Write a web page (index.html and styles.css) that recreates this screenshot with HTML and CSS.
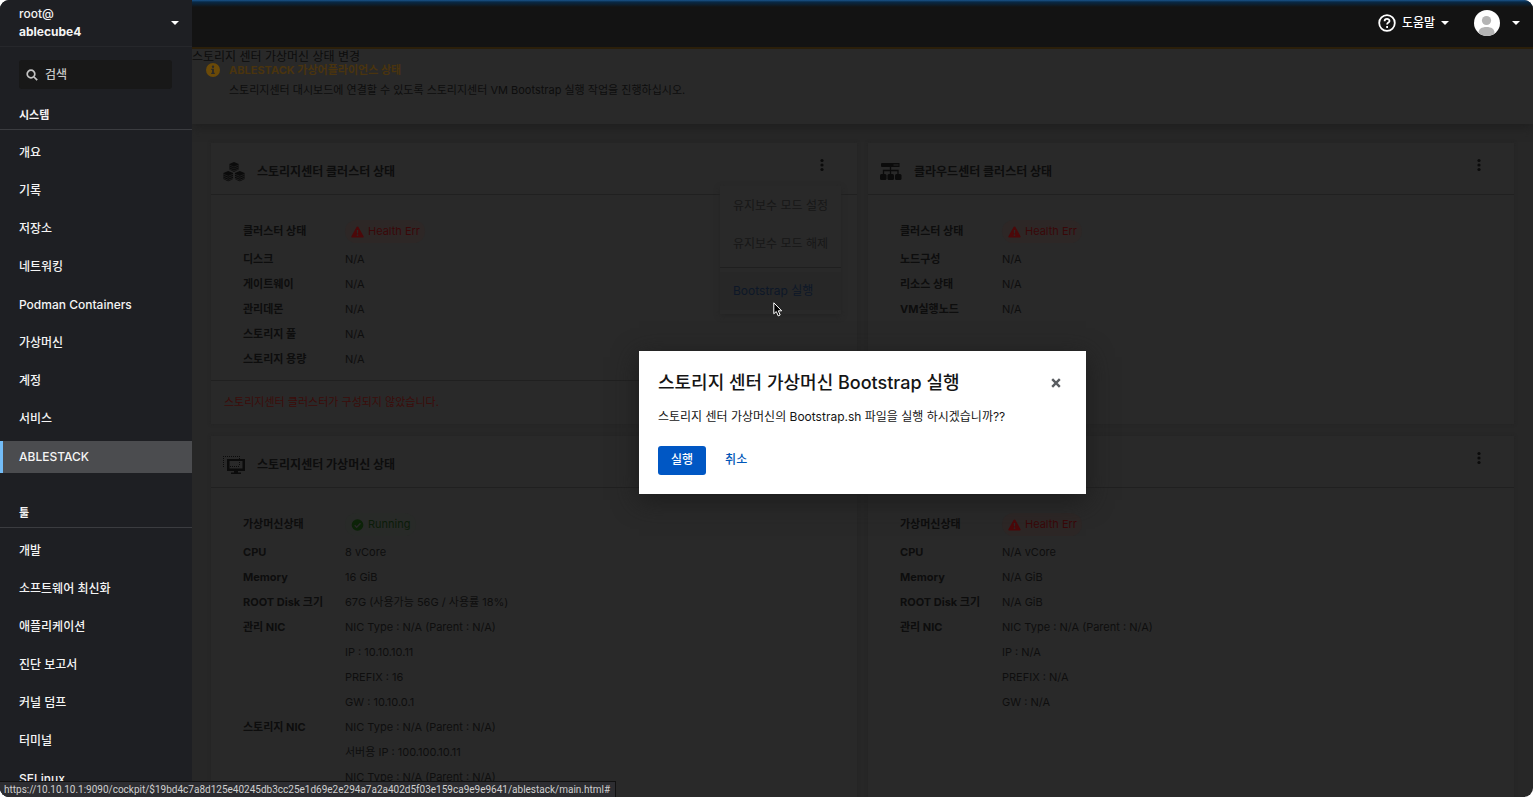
FILE: index.html
```html
<!DOCTYPE html>
<html lang="ko">
<head>
<meta charset="utf-8">
<title>ABLESTACK</title>
<link rel="stylesheet" href="styles.css">
</head>
<body>
<svg class="defs" aria-hidden="true">
  <symbol id="cube" viewBox="0 0 10 10"><path d="M5 0 9.6 2v5.6L5 10 .4 7.6V2z"/><path class="cut" d="M.4 3.1 5 5l4.600-1.900M.4 5 5 6.900 9.600 5M.4 6.900 5 8.800 9.600 6.900"/></symbol>
  <symbol id="cubes" viewBox="0 0 22 20"><use href="#cube" x="6" y="0" width="10" height="10"/><use href="#cube" x="0" y="9" width="10.500" height="10.500"/><use href="#cube" x="11.500" y="9" width="10.500" height="10.500"/></symbol>
  <symbol id="tree" viewBox="0 0 22 20"><path fill-rule="evenodd" d="M2 1h17.500v4H2a1 1 0 0 1-1-1V2a1 1 0 0 1 1-1zm11.500 1.500v1h5v-1z"/><path class="line" d="M10.500 5v7M3.500 13V8.500h14.500V13"/><rect x="0" y="12" width="6.500" height="6" rx="1.500"/><rect x="7.500" y="12" width="6.500" height="6" rx="1.500"/><rect x="15" y="12" width="6.500" height="6" rx="1.500"/></symbol>
  <symbol id="screen" viewBox="0 0 22 20"><path class="dots" d="M0 1.500h17M.5 3v9M16.500 3v8M7 11.500h9"/><path fill-rule="evenodd" d="M4 4h18v12H4zm2.500 2v7.500h13V6z"/><path d="M11 16h4v1.500h3V19H8v-1.500h3z"/></symbol>
  <symbol id="warn" viewBox="0 0 14 12"><path fill-rule="evenodd" d="M7 0c.5 0 .8.2 1 .6l5.500 10c.4.700 0 1.400-.800 1.400H1.300c-.8 0-1.200-.7-.8-1.400L6 .6C6.200.2 6.500 0 7 0zM6.200 3.800l.2 3.800h1.200l.2-3.800zM7 8.300a1 1 0 1 0 0 2 1 1 0 0 0 0-2z"/></symbol>
  <symbol id="kebab" viewBox="0 0 4 14"><circle cx="2" cy="2.500" r="1.600"/><circle cx="2" cy="7" r="1.600"/><circle cx="2" cy="11.500" r="1.600"/></symbol>
  <symbol id="caret" viewBox="0 0 8 4"><path d="M0 0h8L4 4z"/></symbol>
</svg>
<div class="app">
  <aside class="sidebar">
    <button class="host" type="button">
      <span class="host-text"><span>root@</span><strong>ablecube4</strong></span>
      <svg class="caret"><use href="#caret"/></svg>
    </button>
    <label class="search">
      <svg viewBox="0 0 12 12" class="search-icon"><circle cx="5" cy="5" r="3.800"/><path d="m8 8 3.200 3.200"/></svg>
      <input type="text" placeholder="검색" aria-label="검색">
    </label>
    <nav class="nav">
      <h2 class="nav-title">시스템</h2>
      <ul class="nav-list">
        <li><a href="#">개요</a></li>
        <li><a href="#">기록</a></li>
        <li><a href="#">저장소</a></li>
        <li><a href="#">네트워킹</a></li>
        <li><a href="#">Podman Containers</a></li>
        <li><a href="#">가상머신</a></li>
        <li><a href="#">계정</a></li>
        <li><a href="#">서비스</a></li>
        <li><a href="#" class="active" aria-current="page">ABLESTACK</a></li>
      </ul>
      <h2 class="nav-title tools">툴</h2>
      <ul class="nav-list">
        <li><a href="#">개발</a></li>
        <li><a href="#">소프트웨어 최신화</a></li>
        <li><a href="#">애플리케이션</a></li>
        <li><a href="#">진단 보고서</a></li>
        <li><a href="#">커널 덤프</a></li>
        <li><a href="#">터미널</a></li>
        <li><a href="#">SELinux</a></li>
      </ul>
    </nav>
  </aside>
  <div class="main">
    <header class="topbar">
      <button class="top-button" type="button">
        <svg class="help" viewBox="0 0 18 18"><circle cx="9" cy="9" r="7.800"/><path d="M6.600 7.200c0-3 4.900-3 4.900-.2 0 1.700-2.400 1.500-2.400 3.400"/><path d="M9.100 12v2"/></svg>
        <span>도움말</span>
        <svg class="caret"><use href="#caret"/></svg>
      </button>
      <button class="top-button user" type="button" aria-label="세션">
        <svg class="avatar" viewBox="0 0 26 26"><defs><clipPath id="face"><circle cx="13" cy="13" r="13"/></clipPath></defs><circle cx="13" cy="13" r="13" fill="#fff"/><g clip-path="url(#face)" fill="#b4b4b4"><circle cx="12.500" cy="10.500" r="4.600"/><path d="M4.500 26v-3c0-4 3-6 8-6s8 2 8 6v3z"/></g></svg>
        <svg class="caret"><use href="#caret"/></svg>
      </button>
    </header>
    <div class="content">
      <section class="alert">
        <h1 class="page-title">스토리지 센터 가상머신 상태 변경</h1>
        <div class="alert-body">
          <svg class="info" viewBox="0 0 14 14"><circle cx="7" cy="7" r="7"/><path d="M5.300 5.700h2.600v4h.9v1.400H5.200V9.700h.9V7h-.8z"/><circle class="dot" cx="7" cy="3.700" r="1.200"/></svg>
          <div>
            <h2 class="alert-title">ABLESTACK 가상어플라이언스 상태</h2>
            <p>스토리지센터 대시보드에 연결할 수 있도록 스토리지센터 VM Bootstrap 실행 작업을 진행하십시오.</p>
          </div>
        </div>
      </section>
      <div class="cards">
        <article class="card">
          <header class="card-head">
            <svg class="card-icon"><use href="#cubes"/></svg>
            <h3>스토리지센터 클러스터 상태</h3>
            <div class="actions">
              <button class="kebab" type="button" aria-label="작업"><svg><use href="#kebab"/></svg></button>
              <div class="menu">
                <button type="button" disabled>유지보수 모드 설정</button>
                <button type="button" disabled>유지보수 모드 해제</button>
                <hr>
                <button type="button" class="hovered">Bootstrap 실행</button>
              </div>
            </div>
          </header>
          <dl class="facts">
            <dt>클러스터 상태</dt><dd><span class="pill bad"><svg><use href="#warn"/></svg>Health Err</span></dd>
            <dt>디스크</dt><dd>N/A</dd>
            <dt>게이트웨이</dt><dd>N/A</dd>
            <dt>관리데몬</dt><dd>N/A</dd>
            <dt>스토리지 풀</dt><dd>N/A</dd>
            <dt>스토리지 용량</dt><dd>N/A</dd>
          </dl>
          <footer class="card-foot">스토리지센터 클러스터가 구성되지 않았습니다.</footer>
        </article>
        <article class="card">
          <header class="card-head">
            <svg class="card-icon"><use href="#tree"/></svg>
            <h3>클라우드센터 클러스터 상태</h3>
            <div class="actions"><button class="kebab" type="button" aria-label="작업"><svg><use href="#kebab"/></svg></button></div>
          </header>
          <dl class="facts">
            <dt>클러스터 상태</dt><dd><span class="pill bad"><svg><use href="#warn"/></svg>Health Err</span></dd>
            <dt>노드구성</dt><dd>N/A</dd>
            <dt>리소스 상태</dt><dd>N/A</dd>
            <dt>VM실행노드</dt><dd>N/A</dd>
          </dl>
        </article>
        <article class="card">
          <header class="card-head">
            <svg class="card-icon"><use href="#screen"/></svg>
            <h3>스토리지센터 가상머신 상태</h3>
            <div class="actions"><button class="kebab" type="button" aria-label="작업"><svg><use href="#kebab"/></svg></button></div>
          </header>
          <dl class="facts">
            <dt>가상머신상태</dt><dd><span class="pill good"><svg viewBox="0 0 12 12"><circle cx="6" cy="6" r="5.800"/><path class="tick" d="m3.200 6.200 2 2 3.800-3.900"/></svg>Running</span></dd>
            <dt>CPU</dt><dd>8 vCore</dd>
            <dt>Memory</dt><dd>16 GiB</dd>
            <dt>ROOT Disk 크기</dt><dd>67G (사용가능 56G / 사용률 18%)</dd>
            <dt>관리 NIC</dt><dd>NIC Type : N/A (Parent : N/A)</dd>
            <dd>IP : 10.10.10.11</dd>
            <dd>PREFIX : 16</dd>
            <dd>GW : 10.10.0.1</dd>
            <dt>스토리지 NIC</dt><dd>NIC Type : N/A (Parent : N/A)</dd>
            <dd>서버용 IP : 100.100.10.11</dd>
            <dd>NIC Type : N/A (Parent : N/A)</dd>
          </dl>
        </article>
        <article class="card">
          <header class="card-head">
            <svg class="card-icon"><use href="#screen"/></svg>
            <h3>클라우드센터 가상머신 상태</h3>
            <div class="actions"><button class="kebab" type="button" aria-label="작업"><svg><use href="#kebab"/></svg></button></div>
          </header>
          <dl class="facts">
            <dt>가상머신상태</dt><dd><span class="pill bad"><svg><use href="#warn"/></svg>Health Err</span></dd>
            <dt>CPU</dt><dd>N/A vCore</dd>
            <dt>Memory</dt><dd>N/A GiB</dd>
            <dt>ROOT Disk 크기</dt><dd>N/A GiB</dd>
            <dt>관리 NIC</dt><dd>NIC Type : N/A (Parent : N/A)</dd>
            <dd>IP : N/A</dd>
            <dd>PREFIX : N/A</dd>
            <dd>GW : N/A</dd>
          </dl>
        </article>
      </div>
      <div class="backdrop">
        <section class="dialog" role="dialog" aria-modal="true" aria-labelledby="dialog-title">
          <header class="dialog-head">
            <h2 id="dialog-title">스토리지 센터 가상머신 Bootstrap 실행</h2>
            <button class="close" type="button" aria-label="닫기"><svg viewBox="0 0 10 10"><path d="m1.200 1.200 7.600 7.600M8.800 1.200 1.200 8.800"/></svg></button>
          </header>
          <p>스토리지 센터 가상머신의 Bootstrap.sh 파일을 실행 하시겠습니까??</p>
          <div class="dialog-actions">
            <button class="primary" type="button">실행</button>
            <button class="link" type="button">취소</button>
          </div>
        </section>
      </div>
    </div>
  </div>
  <svg class="pointer" viewBox="0 0 10 15"><path d="M.8.8v11l2.500-2.300 1.900 4.400 2-.900-1.900-4.200h3.400z"/></svg>
  <div class="status-bar">https://10.10.10.1:9090/cockpit/$19bd4c7a8d125e40245db3cc25e1d69e2e294a7a2a402d5f03e159ca9e9e9641/ablestack/main.html#</div>
</div>
</body>
</html>
```
FILE: styles.css
```css
* { box-sizing: border-box; margin: 0; padding: 0; }
body { background: #fff; font: 12px/18px Inter, "Noto Sans CJK KR", sans-serif; color: #0d0d0d; }
button, input { font: inherit; color: inherit; background: none; border: 0; }
button { cursor: pointer; }
ul { list-style: none; }
a { color: inherit; text-decoration: none; }
.defs { position: absolute; width: 0; height: 0; }
.app { position: relative; display: flex; height: 100vh; overflow: hidden; border-radius: 9px; background: #272727; }

.sidebar { flex: none; width: 192px; overflow: hidden; background: #1e1f23; color: #f4f4f4; font-weight: 500; }
.host { display: flex; align-items: center; justify-content: space-between; width: 100%; height: 47px; padding: 0 13px 1px 19px; text-align: left; border-bottom: 1px solid #26272b; }
.host-text { display: flex; flex-direction: column; }
.caret { flex: none; width: 8px; height: 4px; fill: #fff; }
.search { display: flex; align-items: center; gap: 7px; margin: 13px 20px 0 19px; height: 29px; padding: 0 7px; border-radius: 3px; background: #181818; }
.search-icon { flex: none; width: 12px; height: 12px; fill: none; stroke: #c4c4c4; stroke-width: 1.700; }
.search input { width: 100%; min-width: 0; outline: 0; }
.search input::placeholder { color: #c8c8c8; opacity: 1; }
.nav-title { margin-top: 16px; height: 25px; padding-left: 19px; border-bottom: 1px solid #3b3c40; font-size: 11px; line-height: 21px; font-weight: 600; }
.nav-title.tools { margin-top: 30px; }
.nav-list { display: flex; flex-direction: column; gap: 6px; padding-top: 7px; }
.nav-list a { display: block; padding: 7px 16px; border-left: 3px solid transparent; }
.nav-list a.active { background: #4b4c4f; border-color: #73bcf7; }

.main { flex: 1; min-width: 0; display: flex; flex-direction: column; }
.topbar { flex: none; display: flex; justify-content: flex-end; gap: 25px; height: 47px; padding: 0 13px 1px 0; background: linear-gradient(#1a548c 0, #082946 2px, #131313 7px); color: #fff; font-weight: 500; }
.top-button { display: flex; align-items: center; gap: 6px; }
.user { gap: 12px; }
.help { width: 18px; height: 18px; fill: none; stroke: #fff; stroke-width: 1.800; }
.avatar { width: 26px; height: 26px; }

.content { position: relative; flex: 1; min-height: 0; overflow: hidden; }
.alert { height: 77px; border-top: 2px solid #2b1f0a; background: #292929; box-shadow: 0 3px 10px #1e1e1e; font-size: 11px; }
.page-title { height: 12px; font-size: 12px; line-height: 15px; font-weight: 400; color: #0c0c0c; }
.alert-body { display: flex; gap: 9px; padding-left: 14px; }
.info { width: 14px; height: 14px; margin-top: 2px; fill: #6b4a08; }
.info path, .info .dot { fill: #292929; }
.alert-title { font-size: 11px; line-height: 18px; font-weight: 700; color: #4a340e; }
.alert p { line-height: 22px; }

.cards { display: grid; grid-template-columns: 1fr 1fr; gap: 12px 11px; padding: 19px; }
.card { background: #292929; box-shadow: 0 0 3px #232323; }
.card-head { display: flex; align-items: center; gap: 12px; height: 52px; padding: 6px 29px 0 12px; border-bottom: 1px solid #202020; }
.card-icon { width: 22px; height: 20px; fill: #0b0b0b; }
.cut { fill: none; stroke: #292929; stroke-width: .6; }
.line { fill: none; stroke: #0b0b0b; stroke-width: 1.300; }
.dots { fill: none; stroke: #0b0b0b; stroke-width: 1; stroke-dasharray: 1 1; }
.card-head h3 { font-size: 12px; font-weight: 700; }
.actions { position: relative; margin-left: auto; height: 34px; }
.kebab { display: block; padding: 3px 4px; }
.kebab svg { display: block; width: 4px; height: 14px; fill: #0b0b0b; }
.menu { position: absolute; top: 31px; right: -13px; width: 121px; padding: 1px 0 4px; background: #292929; box-shadow: 0 2px 5px #242424; font-size: 12px; }
.menu button { display: block; width: 100%; height: 38px; padding-left: 13px; text-align: left; white-space: nowrap; color: #171717; }
.menu hr { margin: 4px 0; border: 0; border-top: 1px solid #1f1f1f; }
.menu .hovered { background: #272727; color: #0d1728; }
.facts { display: grid; grid-template-columns: 102px 1fr; gap: 8px 0; align-items: center; padding: 25px 32px 12px; font-size: 11px; line-height: 17px; }
.facts dt { font-weight: 700; }
.facts dd { grid-column: 2; color: #0e0e0e; }
.pill { display: inline-flex; vertical-align: top; align-items: center; gap: 4px; height: 23px; padding: 0 5px 0 6px; border-radius: 12px; }
.pill svg { width: 13px; height: 12px; }
.pill.bad { background: #2d2726; color: #3a0809; }
.pill.bad svg { fill: #4c0809; }
.pill.good { background: #282a28; color: #0b1c09; }
.pill.good svg { fill: #0c2308; }
.tick { fill: none; stroke: #292929; stroke-width: 1.500; }
.card-foot { padding: 12px 13px 13px; border-top: 1px solid #202020; font-size: 11px; color: #3c0c0a; }

.backdrop { position: absolute; inset: 0; display: flex; align-items: center; justify-content: center; }
.dialog { width: 447px; max-width: 100%; padding: 19px; background: #fff; color: #151515; box-shadow: 0 6px 24px #1c1c1c; }
.dialog-head { display: flex; align-items: center; justify-content: space-between; padding-right: 6px; }
.dialog-head h2 { font-size: 18px; line-height: 26px; font-weight: 500; }
.close svg { display: block; width: 10px; height: 10px; fill: none; stroke: #5a5d61; stroke-width: 2.400; }
.dialog p { margin: 12px 0 20px; line-height: 18px; }
.dialog-actions { display: flex; gap: 6px; font-weight: 500; }
.dialog-actions button { height: 29px; padding: 0 13px; }
.primary { border-radius: 3px; background: #0057c4; color: #fff; }
.link { color: #0057b8; }

.pointer { position: absolute; left: 773px; top: 302px; width: 10px; height: 15px; fill: #000; stroke: #fff; stroke-width: 1; }
.status-bar { position: absolute; left: 0; bottom: 0; height: 16px; padding: 0 5px 0 4px; border-top: 1px solid #111; border-right: 1px solid #111; background: #2d2d31; color: #cfcfcf; font-family: Roboto, sans-serif; font-size: 10px; line-height: 15px; white-space: nowrap; }
```
